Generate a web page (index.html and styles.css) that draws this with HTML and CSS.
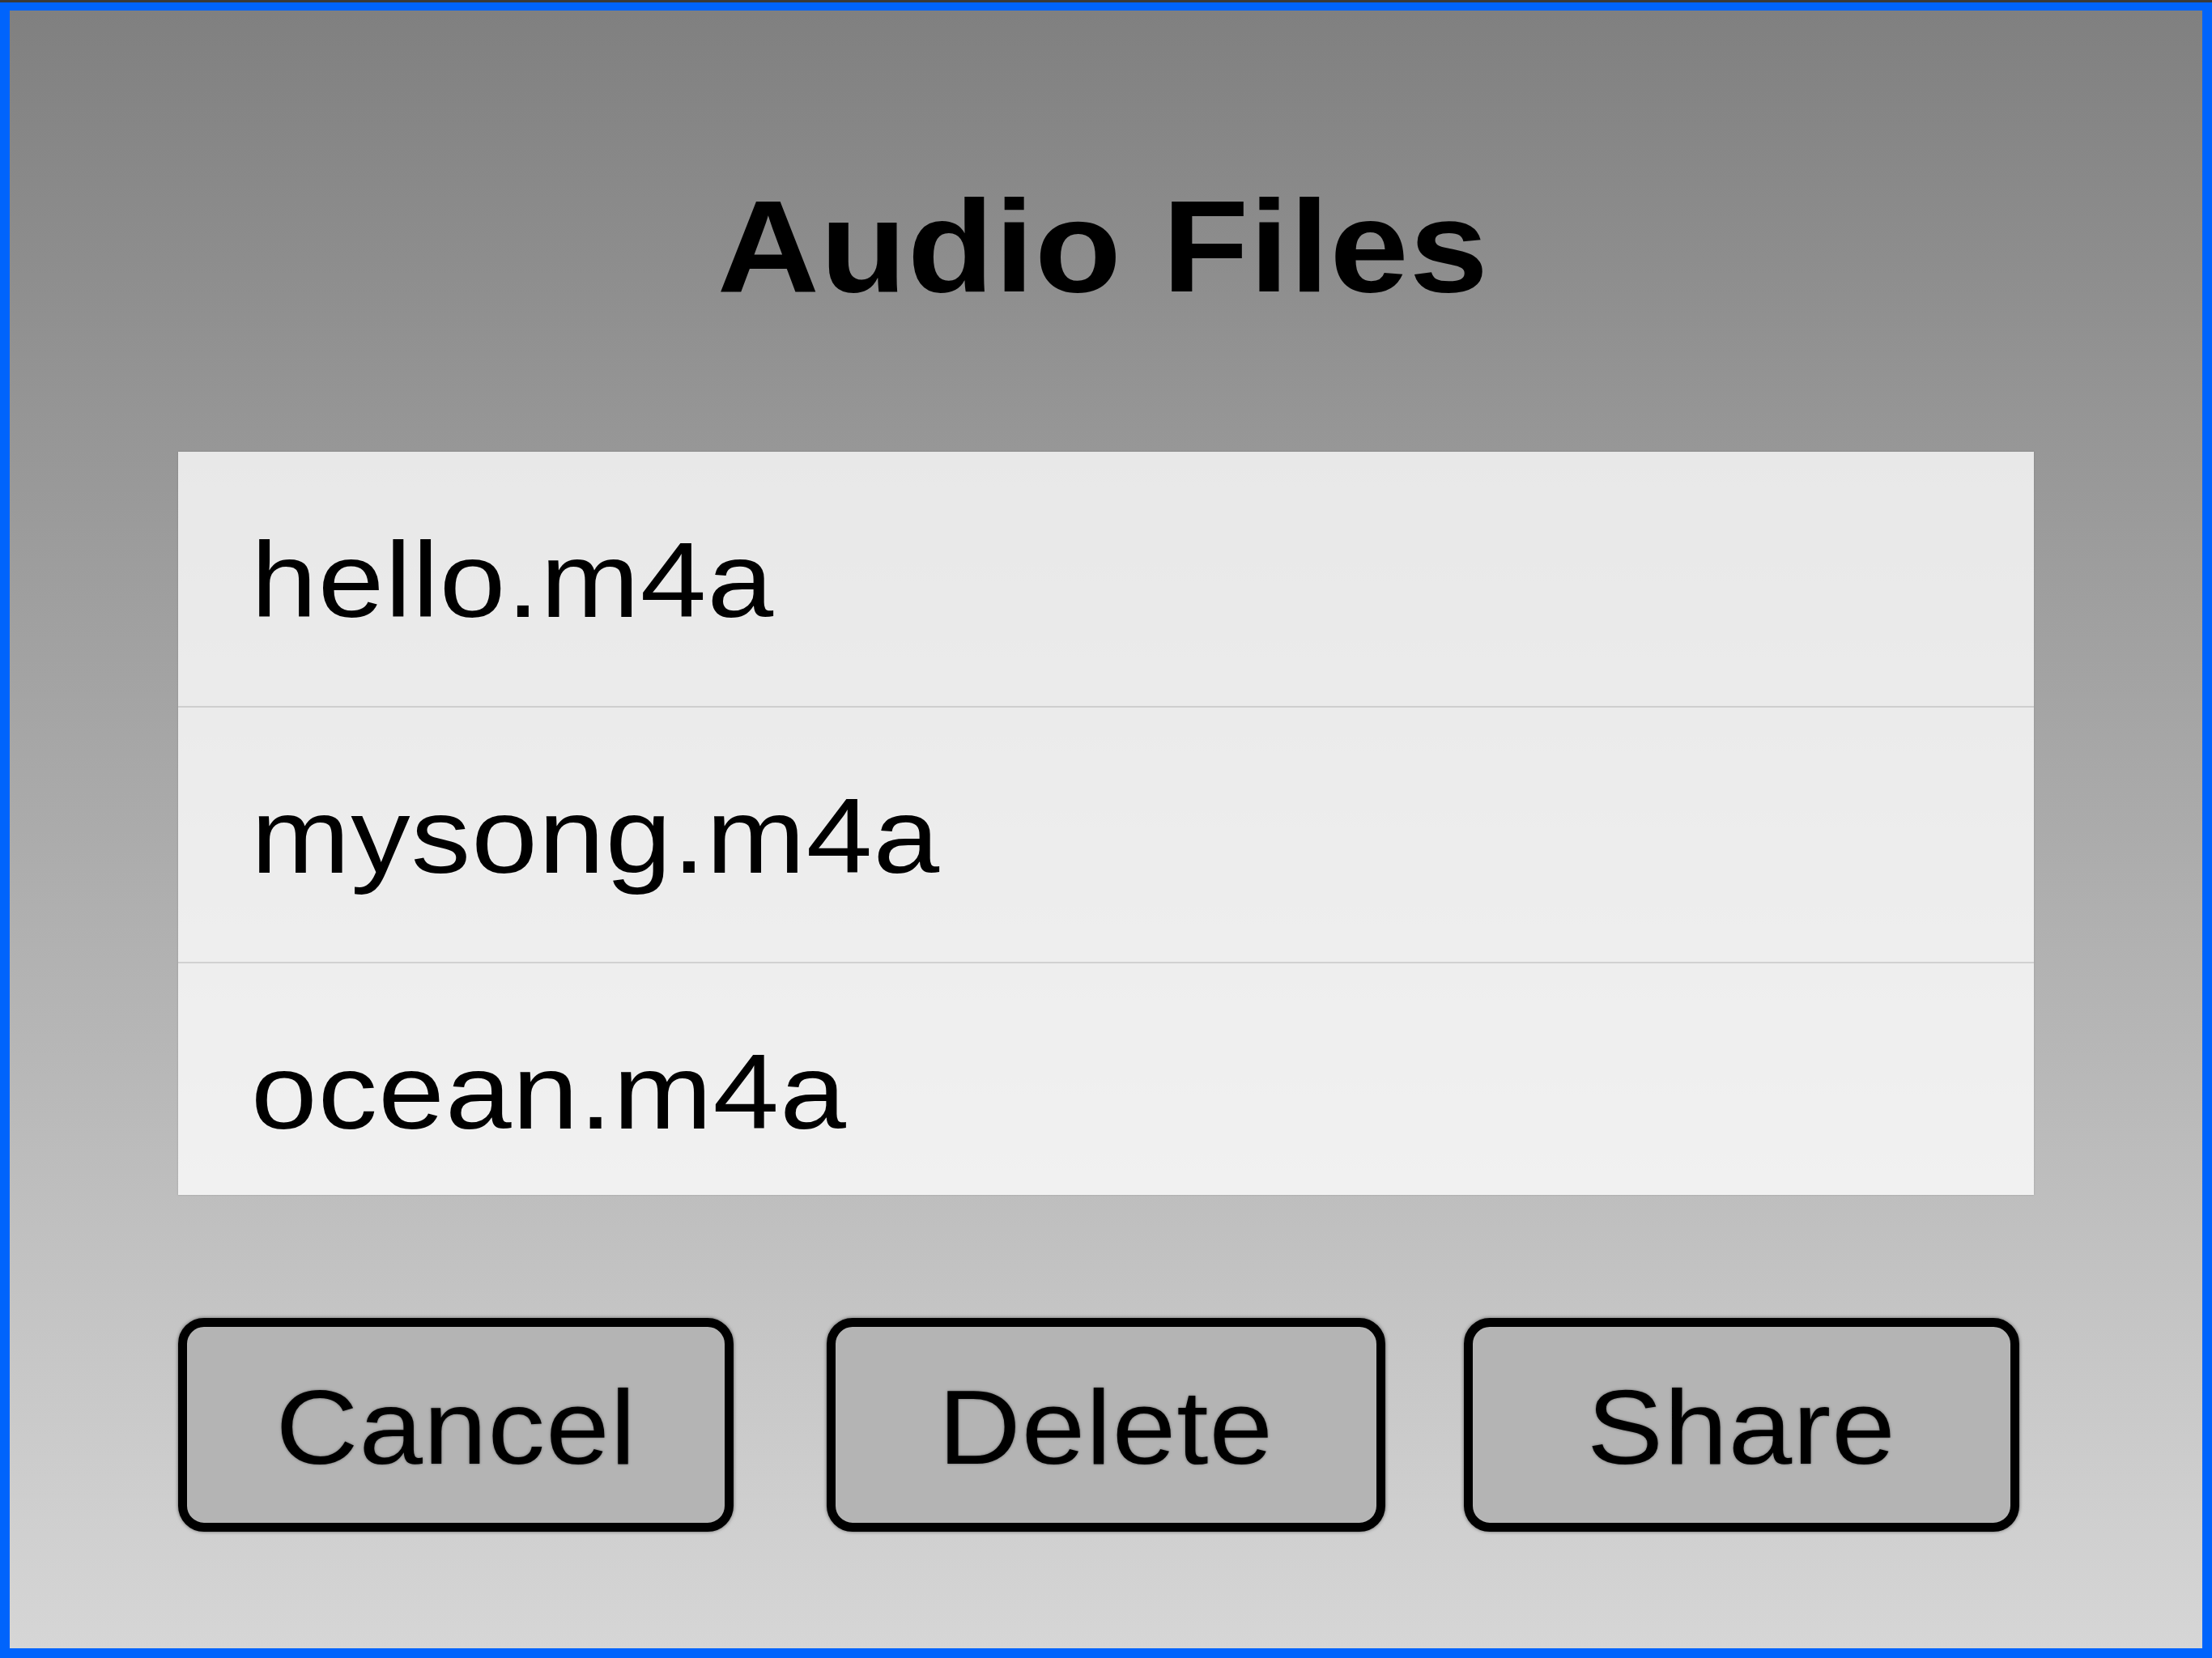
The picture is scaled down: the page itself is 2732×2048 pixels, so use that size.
FILE: index.html
```html
<!DOCTYPE html>
<html lang="en">
<head>
<meta charset="utf-8">
<title>Audio Files</title>
<link rel="stylesheet" href="styles.css">
</head>
<body>
<div class="screen">
  <h1 class="title"><span class="title-text">Audio Files</span></h1>
  <ul class="file-list">
    <li class="file-row"><span class="file-name">hello.m4a</span></li>
    <li class="file-row"><span class="file-name">mysong.m4a</span></li>
    <li class="file-row"><span class="file-name">ocean.m4a</span></li>
  </ul>
  <div class="actions">
    <button class="btn btn-cancel"><span class="btn-label">Cancel</span></button>
    <button class="btn btn-delete"><span class="btn-label">Delete</span></button>
    <button class="btn btn-share"><span class="btn-label">Share</span></button>
  </div>
</div>
</body>
</html>
```

FILE: styles.css
```css
html, body {
  margin: 0;
  padding: 0;
}

body {
  background: #3a3a3a;
  padding-top: 3px;
}

.screen {
  box-sizing: border-box;
  height: 2045px;
  border: 12px solid #0064fc;
  border-top-width: 10px;
  background: linear-gradient(#808080, #d6d6d6);
  display: flex;
  flex-direction: column;
  align-items: center;
  font-family: "Liberation Sans", Arial, Helvetica, sans-serif;
  color: #000;
}

.title {
  margin: 211px 0 0 0;
  font-size: 161px;
  line-height: 161px;
  font-weight: 700;
  letter-spacing: 1px;
}

.title-text {
  display: inline-block;
  transform: scaleX(1.085);
  transform-origin: 50% 50%;
  position: relative;
  left: -4px;
}

.file-list {
  list-style: none;
  margin: 173px 0 0 0;
  padding: 0;
  width: 2292px;
  height: 918px;
  overflow: hidden;
  background: rgba(255, 255, 255, 0.78);
  box-shadow: 0 0 2px rgba(0, 0, 0, 0.18);
}

.file-row {
  box-sizing: border-box;
  height: 316px;
  padding: 4px 0 0 90px;
  line-height: 310px;
  font-size: 131px;
  letter-spacing: 1px;
  border-bottom: 2px solid rgba(0, 0, 0, 0.12);
}

.file-name {
  display: inline-block;
  transform: scaleX(1.12);
  transform-origin: 0 50%;
}

.actions {
  width: 2292px;
  margin-top: 152px;
  display: flex;
}

.btn {
  box-sizing: border-box;
  width: 686px;
  height: 264px;
  padding: 6px 0 0 0;
  border: 11px solid #000;
  border-radius: 32px;
  background: #b4b4b4;
  box-shadow: 0 0 4px rgba(0, 0, 0, 0.55);
  display: flex;
  align-items: center;
  justify-content: center;
  font-family: "Liberation Sans", Arial, Helvetica, sans-serif;
  font-size: 130px;
  line-height: 130px;
  letter-spacing: 1px;
  color: #000;
  text-shadow: 0 0 3px rgba(0, 0, 0, 0.45);
}

.btn-label {
  display: inline-block;
  transform: scaleX(1.085);
  transform-origin: 50% 50%;
}

.btn-delete {
  width: 690px;
  margin-left: 115px;
}

.btn-share {
  margin-left: 97px;
}
```
